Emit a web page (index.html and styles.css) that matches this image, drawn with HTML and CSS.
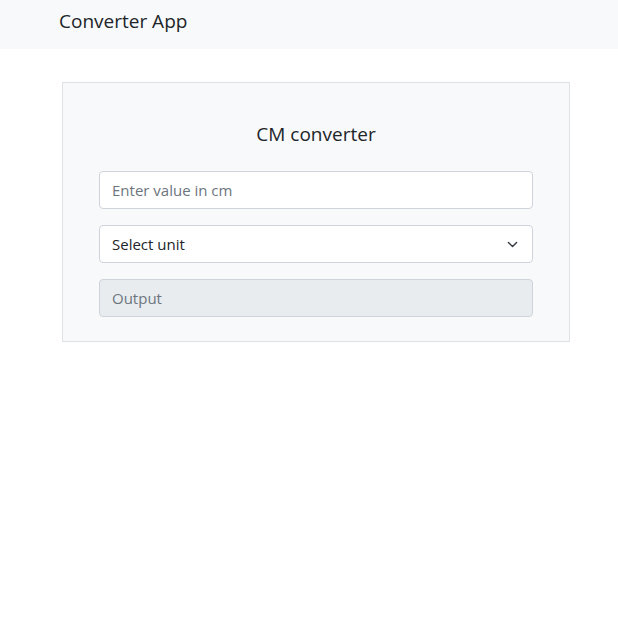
FILE: index.html
```html
<!DOCTYPE html>
<html lang="en">
<head>
<meta charset="utf-8">
<title>Converter App</title>
<link rel="stylesheet" href="styles.css">
</head>
<body>
<nav class="navbar">
  <span class="brand">Converter App</span>
</nav>
<main class="container">
  <section class="card">
    <h5 class="title">CM converter</h5>
    <form class="form">
      <input class="field" type="text" placeholder="Enter value in cm">
      <div class="select-wrap">
        <select class="field select">
          <option>Select unit</option>
        </select>
        <svg class="chevron" width="16" height="16" viewBox="0 0 16 16" aria-hidden="true">
          <path d="M2 5l6 6 6-6" fill="none" stroke="#343a40" stroke-width="2" stroke-linecap="round" stroke-linejoin="round"/>
        </svg>
      </div>
      <input class="field" type="text" placeholder="Output" disabled>
    </form>
  </section>
</main>
</body>
</html>
```
FILE: styles.css
```css
* { box-sizing: border-box; }
html, body { margin: 0; }
body {
  font-family: "Open Sans", "Noto Sans", sans-serif;
  font-size: 16px;
  line-height: 1.5;
  color: #212529;
  background: #fff;
}
.navbar {
  background: #f8f9fa;
  height: 49px;
  display: flex;
  align-items: flex-start;
  padding: 6px 0 0 59px;
}
.brand {
  font-size: 19px;
  line-height: 30px;
  color: #212529;
}
.container {
  padding: 33px 48px 0 62px;
}
.card {
  width: 508px;
  background: #f8f9fa;
  border: 1px solid #dee2e6;
  padding: 36px 36px 24px 36px;
}
.title {
  margin: 0 0 22px 0;
  font-size: 19px;
  font-weight: 400;
  line-height: 30px;
  text-align: center;
}
.form {
  display: flex;
  flex-direction: column;
  gap: 16px;
}
.field {
  display: block;
  width: 100%;
  height: 38px;
  padding: 6px 12px;
  font-family: inherit;
  font-size: 15px;
  line-height: 24px;
  color: #212529;
  background: #fff;
  border: 1px solid #ced4da;
  border-radius: 4px;
  outline: none;
}
.field::placeholder { color: #6c757d; opacity: 1; }
.field:disabled { background: #e9ecef; }
.select-wrap { position: relative; }
.select {
  appearance: none;
  -webkit-appearance: none;
  padding-right: 36px;
}
.chevron {
  position: absolute;
  right: 15px;
  top: 14px;
  width: 11px;
  height: 11px;
  pointer-events: none;
}
```
